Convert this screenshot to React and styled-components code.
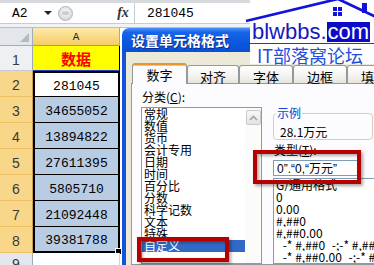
import React from "react";
import styled, { createGlobalStyle } from "styled-components";

const GlobalStyle = createGlobalStyle`
  html, body {
    margin: 0;
    padding: 0;
    background: #fff;
  }
  body {
    font-family: "Noto Sans CJK SC", "Noto Sans", sans-serif;
    color: #000;
  }
`;

const Page = styled.div`
  position: relative;
  width: 374px;
  height: 265px;
  overflow: hidden;
  display: flex;
  flex-direction: column;
  background: #fff;
`;

/* ---------- formula bar ---------- */

const FormulaBar = styled.div`
  display: flex;
  align-items: stretch;
  height: 20px;
  border-top: 3px solid #d6dadf;
  border-bottom: 1px solid #c6ccd3;
  background: #fff;
`;

const NameBox = styled.div`
  width: 58px;
  box-sizing: border-box;
  display: flex;
  align-items: center;
  padding-left: 12px;
  font: 13px "Liberation Mono", monospace;
`;

const DropArrow = styled.span`
  margin-left: auto;
  margin-right: 6px;
  width: 0;
  height: 0;
  border-left: 4px solid transparent;
  border-right: 4px solid transparent;
  border-top: 4px solid #222;
`;

const Knob = styled.div`
  align-self: center;
  width: 15px;
  height: 15px;
  box-sizing: border-box;
  border-radius: 50%;
  border: 1px solid #aeb3b9;
  background: radial-gradient(circle at 50% 40%, #fafafa 0%, #dcdfe3 60%, #c4c8cd 100%);
  display: flex;
  align-items: center;
  justify-content: center;

  &::after {
    content: "";
    width: 7px;
    height: 4px;
    border-radius: 50%;
    background: #c9cdd2;
  }
`;

const Spacer = styled.div`
  flex: 1;
`;

const FxLabel = styled.div`
  width: 22px;
  display: flex;
  align-items: center;
  justify-content: center;
  font: italic 700 14px "Liberation Serif", serif;
  color: #333;
`;

const FormulaInput = styled.div`
  width: 240px;
  box-sizing: border-box;
  border-left: 1px solid #c6ccd3;
  padding-left: 12px;
  display: flex;
  align-items: center;
  font: 13px "Liberation Mono", monospace;
`;

const BarGap = styled.div`
  height: 3px;
  background: #f0f2f5;
  border-bottom: 1px solid #b8bec6;
`;

/* ---------- sheet ---------- */

const Main = styled.div`
  flex: 1;
  display: flex;
  gap: 2px;
  min-height: 0;
`;

const Sheet = styled.div`
  width: 120px;
  flex-shrink: 0;
  display: flex;
  flex-direction: column;
`;

const HeaderRow = styled.div`
  height: 18px;
  display: flex;
  flex-shrink: 0;
`;

const Corner = styled.div`
  width: 33px;
  box-sizing: border-box;
  background: #e3e7ec;
  border-right: 1px solid #a4acb6;
  border-bottom: 1px solid #a4acb6;
  display: flex;
  justify-content: flex-end;
  align-items: flex-end;
  padding: 0 3px 3px 0;
`;

const CornerMark = styled.span`
  width: 0;
  height: 0;
  border-left: 9px solid transparent;
  border-bottom: 9px solid #b5bbc3;
`;

const ColHeader = styled.div`
  flex: 1;
  box-sizing: border-box;
  background: linear-gradient(180deg, #fdeaa9 0%, #f9d983 55%, #f6cc68 100%);
  border-right: 1px solid #c8a45d;
  border-bottom: 1px solid #c29a45;
  display: flex;
  align-items: center;
  justify-content: center;
  font: 11px "Liberation Mono", monospace;
  color: #222;
`;

const Row = styled.div`
  display: flex;
  height: ${(p) => (p.$h ? `${p.$h}px` : "auto")};
  flex: ${(p) => (p.$h ? "0 0 auto" : "1")};
`;

const rowHeaderTones = {
  plain: "background: #e4e8ee; border-bottom: 1px solid #c5cbd3; border-right: 1px solid #9eaab8;",
  light: "background: #eef0f4; border-bottom: 1px solid #c5cbd3; border-right: 1px solid #9eaab8;",
  selected: "background: #f9d78a; border-bottom: 1px solid #eec162; border-right: 1px solid #c9a048;",
};

const RowHeader = styled.div`
  width: 33px;
  box-sizing: border-box;
  ${(p) => rowHeaderTones[p.$tone]}
  display: flex;
  align-items: center;
  justify-content: center;
  padding-top: 3px;
  font: 14px "Liberation Sans", sans-serif;
  color: #3a3a3a;
`;

const cellVariants = {
  title: `
    background: #ffff00;
    border-right: 1px solid #000;
    border-bottom: 1px solid #2440c8;
    color: #ff0000;
    font: 700 15px "Noto Sans CJK SC", sans-serif;
    padding-top: 0;
  `,
  active: `
    background: #fff;
    border: 2px solid #000;
    border-bottom: 1px solid #000;
  `,
  selected: `
    background: #b8cce4;
    border-left: 2px solid #000;
    border-right: 2px solid #000;
    border-bottom: 1px solid #000;
  `,
  last: `
    background: #b8cce4;
    border: 2px solid #000;
    border-top: none;
  `,
  plain: `
    background: #fff;
    border-right: 1px solid #d4d4d4;
  `,
};

const Cell = styled.div`
  position: relative;
  flex: 1;
  box-sizing: border-box;
  display: flex;
  align-items: center;
  justify-content: center;
  padding-top: 3px;
  font: 13px "Liberation Mono", monospace;
  ${(p) => cellVariants[p.$variant]}
`;

const FillHandle = styled.span`
  position: absolute;
  right: -4px;
  bottom: -4px;
  width: 5px;
  height: 5px;
  background: #000;
  border: 1px solid #fff;
`;

/* ---------- dialog ---------- */

const Dialog = styled.div`
  flex: 1;
  min-width: 0;
  display: flex;
  flex-direction: column;
  overflow: hidden;
`;

const TitleBar = styled.div`
  height: 24px;
  flex-shrink: 0;
  display: flex;
  align-items: center;
  padding-left: 9px;
  border-radius: 7px 0 0 0;
  background: linear-gradient(180deg, #4a93f8 0%, #1764ea 18%, #0a58df 60%, #0650d6 100%);
  color: #fff;
  font-size: 14px;
  font-weight: 700;
  text-shadow: 1px 1px 0 #0b2a8c;
  white-space: nowrap;
`;

const DialogBody = styled.div`
  flex: 1;
  min-height: 0;
  display: flex;
  flex-direction: column;
  background: #ece9d8;
  border-left: 4px solid #1452dc;
  padding: 11px 0 0 5px;
`;

const TabStrip = styled.div`
  height: 21px;
  flex-shrink: 0;
  display: flex;
  align-items: flex-end;
  margin: 0 0 -1px 1px;
  position: relative;
  z-index: 1;
`;

const Tab = styled.div`
  flex-shrink: 0;
  width: ${(p) => p.$w}px;
  box-sizing: border-box;
  display: flex;
  align-items: center;
  justify-content: center;
  font-size: 13px;
  border: 1px solid #919b9c;
  border-bottom: none;
  border-radius: 3px 3px 0 0;
  ${(p) =>
    p.$active
      ? `
    height: 21px;
    background: #fcfcfe;
    border-top: 2px solid #e8932e;
    box-shadow: inset 0 1px 0 #ffc846;
  `
      : `
    height: 18px;
    margin-bottom: 1px;
    padding-top: 3px;
    background: linear-gradient(180deg, #ffffff 0%, #f3f2ee 60%, #e6e4dc 100%);
  `}
`;

const TabPanel = styled.div`
  flex: 1;
  min-height: 0;
  display: flex;
  gap: 11px;
  background: #fcfcfe;
  border: 1px solid #919b9c;
  border-right: none;
  padding: 6px 0 0 9px;
`;

const LeftCol = styled.div`
  width: 121px;
  flex-shrink: 0;
  display: flex;
  flex-direction: column;
`;

const RightCol = styled.div`
  width: 112px;
  flex-shrink: 0;
  display: flex;
  flex-direction: column;
`;

const FieldLabel = styled.div`
  font-size: 12px;
  line-height: ${(p) => p.$lh || 12}px;
  padding-left: 1px;
  margin-top: ${(p) => p.$mt || 0}px;
  white-space: nowrap;
`;

const ListBox = styled.div`
  margin-top: 3px;
  height: 170px;
  display: flex;
  border: 1px solid #7f9db9;
  background: #fff;
`;

const ListItems = styled.div`
  flex: 1;
  min-width: 0;
  display: flex;
  flex-direction: column;
`;

const ListItem = styled.div`
  height: 12px;
  line-height: 12px;
  font-size: 12px;
  padding-left: 2px;
  white-space: nowrap;
  overflow: hidden;
  flex-shrink: 0;
  ${(p) => p.$selected && "background: #316ac5; color: #fff;"}
`;

const ScrollTrack = styled.div`
  width: 16px;
  flex-shrink: 0;
  background: #fbfbf9;
  display: flex;
  flex-direction: column;
  align-items: center;
  padding-top: 2px;
`;

const ScrollButton = styled.div`
  width: 15px;
  height: 15px;
  box-sizing: border-box;
  border: 1px solid #cacaca;
  border-radius: 2px;
  background: linear-gradient(180deg, #f8f8f8 0%, #e3e3e3 100%);
  display: flex;
  align-items: center;
  justify-content: center;
`;

const Group = styled.fieldset`
  margin: 17px 0 0;
  padding: 7px 6px 1px;
  width: 100px;
  min-width: 0;
  box-sizing: border-box;
  border: 1px solid #d0d0bf;
  border-radius: 4px;
`;

const GroupLegend = styled.legend`
  font-size: 12px;
  line-height: 12px;
  color: #0046d5;
  padding: 0 1px;
  margin-left: -4px;
`;

const SampleText = styled.div`
  font-size: 12px;
  line-height: 12px;
  white-space: nowrap;
`;

const TypeInput = styled.div`
  margin-top: 4px;
  width: 85px;
  height: 18px;
  box-sizing: border-box;
  border: 1px solid #7f9db9;
  background: #fff;
  padding-left: 3px;
  font-family: "Liberation Sans", "Noto Sans CJK SC", sans-serif;
  font-size: 12px;
  line-height: 16px;
  white-space: nowrap;
  overflow: hidden;
`;

const TypeList = styled.div`
  margin-top: 2px;
  width: 120px;
  height: 100px;
  border: 1px solid #7f9db9;
  border-right: none;
  background: #fff;
  display: flex;
  flex-direction: column;
`;

/* ---------- overlays ---------- */

const RedFrame = styled.div`
  position: absolute;
  left: ${(p) => p.$x}px;
  top: ${(p) => p.$y}px;
  width: ${(p) => p.$w}px;
  height: ${(p) => p.$h}px;
  box-sizing: border-box;
  border: 4px solid #b60000;
  box-shadow: 2px 2px 3px rgba(0, 0, 0, 0.35), inset 2px 2px 3px rgba(0, 0, 0, 0.3);
  z-index: 6;
`;

const Watermark = styled.div`
  position: absolute;
  left: 250px;
  top: 0;
  width: 124px;
  height: 64px;
  background: #fff;
  z-index: 5;
  display: flex;
  flex-direction: column;
`;

const House = styled.svg`
  display: block;
  flex-shrink: 0;
  width: 124px;
  height: 20px;
  overflow: visible;
`;

const LogoLine = styled.div`
  display: flex;
  align-items: flex-start;
  padding-left: 2px;
  height: 24px;
  font: 22px "Liberation Sans", Arial, sans-serif;
  line-height: 24px;
  color: #1616c2;
`;

const ComBox = styled.span`
  margin-top: 2px;
  height: 20px;
  line-height: 20px;
  padding: 0 1px;
  background: #0c0cc8;
  color: #fff;
`;

const RedRule = styled.div`
  height: 3px;
  margin-top: -1px;
  margin-left: -3px;
  background: #9e1b1b;
`;

const Tagline = styled.div`
  margin-top: 2px;
  padding-left: 7px;
  font-size: 18px;
  line-height: 18px;
  color: #2450d8;
  white-space: nowrap;
`;

const numbers = ["281045", "34655052", "13894822", "27611395", "5805710", "21092448", "39381788"];

const categories = [
  "常规", "数值", "货币", "会计专用", "日期", "时间", "百分比",
  "分数", "科学记数", "文本", "特殊", "自定义",
];

const formats = [
  "G/通用格式",
  "0",
  "0.00",
  "#,##0",
  "#,##0.00",
  '_-* #,##0_-;-* #,##0_-;_-* "-"_-;_-@_-',
  '_-* #,##0.00_-;-* #,##0.00_-;_-* "-"??_-;_-@_-',
];

const tabs = [
  { label: "数字", w: 55, active: true },
  { label: "对齐", w: 52 },
  { label: "字体", w: 54 },
  { label: "边框", w: 54 },
  { label: "填充", w: 54 },
];

function App() {
  return (
    <Page>
      <GlobalStyle />
      <FormulaBar>
        <NameBox>
          A2
          <DropArrow />
        </NameBox>
        <Knob />
        <Spacer />
        <FxLabel>fx</FxLabel>
        <FormulaInput>281045</FormulaInput>
      </FormulaBar>
      <BarGap />

      <Main>
        <Sheet>
          <HeaderRow>
            <Corner>
              <CornerMark />
            </Corner>
            <ColHeader>A</ColHeader>
          </HeaderRow>
          <Row $h={25}>
            <RowHeader $tone="light">1</RowHeader>
            <Cell $variant="title">数据</Cell>
          </Row>
          {numbers.map((n, i) => {
            const variant = i === 0 ? "active" : i === numbers.length - 1 ? "last" : "selected";
            return (
              <Row $h={26} key={n}>
                <RowHeader $tone="selected">{i + 2}</RowHeader>
                <Cell $variant={variant}>
                  {n}
                  {variant === "last" && <FillHandle />}
                </Cell>
              </Row>
            );
          })}
          <Row>
            <RowHeader $tone="plain">9</RowHeader>
            <Cell $variant="plain" />
          </Row>
        </Sheet>

        <Dialog>
          <TitleBar>设置单元格格式</TitleBar>
          <DialogBody>
            <TabStrip>
              {tabs.map((t) => (
                <Tab key={t.label} $w={t.w} $active={t.active}>
                  {t.label}
                </Tab>
              ))}
            </TabStrip>
            <TabPanel>
              <LeftCol>
                <FieldLabel $lh={14}>
                  分类(<u>C</u>):
                </FieldLabel>
                <ListBox>
                  <ListItems>
                    {categories.map((c) => (
                      <ListItem key={c} $selected={c === "自定义"}>
                        {c}
                      </ListItem>
                    ))}
                  </ListItems>
                  <ScrollTrack>
                    <ScrollButton>
                      <svg width="9" height="6" viewBox="0 0 9 6">
                        <path d="M1 5 L4.5 1.5 L8 5" fill="none" stroke="#a3a3a3" strokeWidth="1.6" />
                      </svg>
                    </ScrollButton>
                  </ScrollTrack>
                </ListBox>
              </LeftCol>

              <RightCol>
                <Group>
                  <GroupLegend>示例</GroupLegend>
                  <SampleText>28.1万元</SampleText>
                </Group>
                <FieldLabel $mt={4}>
                  类型(<u>T</u>):
                </FieldLabel>
                <TypeInput>0”.“0,“万元”</TypeInput>
                <TypeList>
                  {formats.map((f) => (
                    <ListItem key={f}>{f}</ListItem>
                  ))}
                </TypeList>
              </RightCol>
            </TabPanel>
          </DialogBody>
        </Dialog>
      </Main>

      <Watermark>
        <House viewBox="0 0 124 20">
          <polyline points="-4,21 88,-1 126,17" fill="none" stroke="#1212dc" strokeWidth="2.8" />
          <rect x="112" y="3" width="5" height="10" fill="#1212dc" />
          <rect x="83" y="7" width="4" height="4" fill="#1212dc" />
          <rect x="88" y="7" width="4" height="4" fill="#1212dc" />
          <rect x="83" y="12" width="4" height="4" fill="#1212dc" />
          <rect x="88" y="12" width="4" height="4" fill="#1212dc" />
        </House>
        <LogoLine>
          blwbbs.<ComBox>com</ComBox>
        </LogoLine>
        <RedRule />
        <Tagline>IT部落窝论坛</Tagline>
      </Watermark>

      <RedFrame $x={253} $y={150} $w={108} $h={34} />
      <RedFrame $x={137} $y={237} $w={92} $h={25} />
    </Page>
  );
}

export default App;
